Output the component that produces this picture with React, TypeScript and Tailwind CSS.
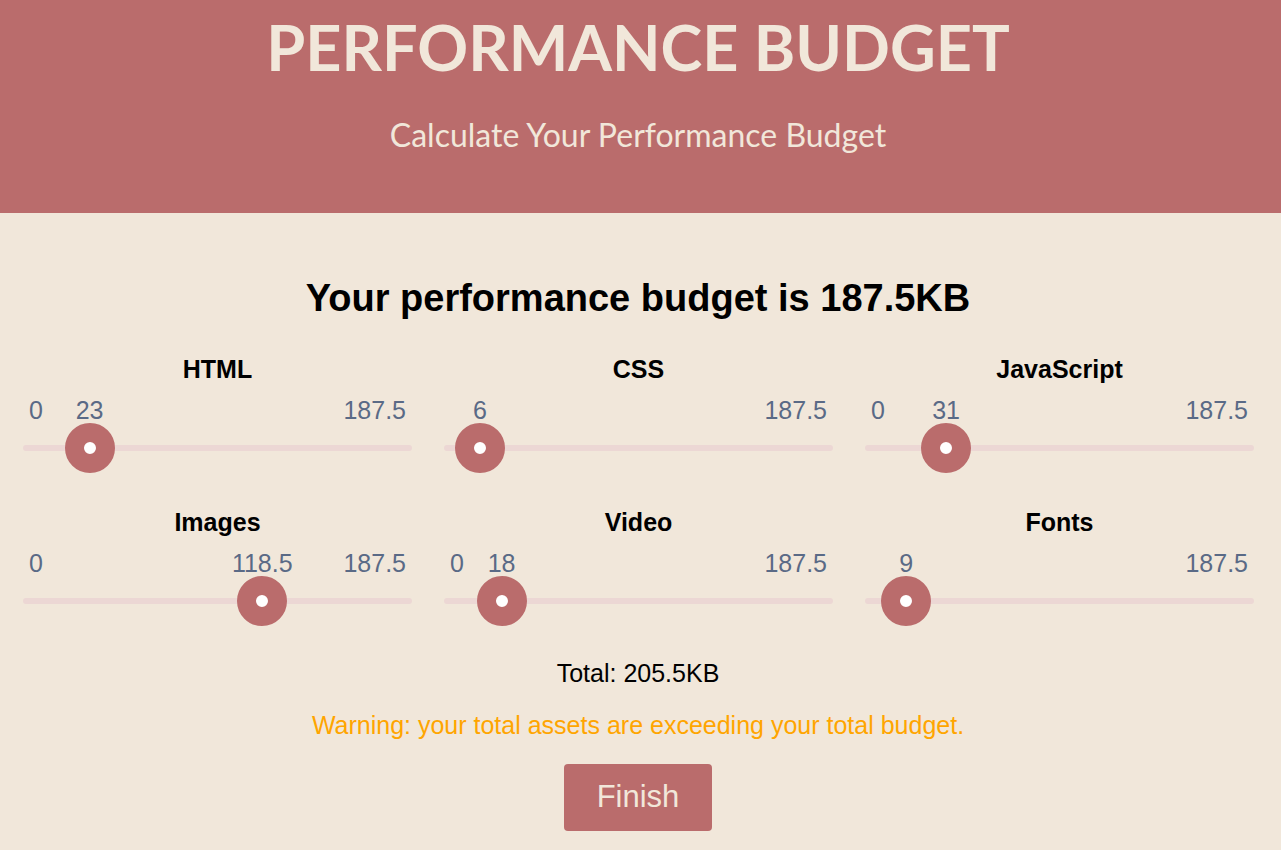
import React from "react";

const MAX = 187.5;

const assets = [
  { name: "HTML", value: 23 },
  { name: "CSS", value: 6 },
  { name: "JavaScript", value: 31 },
  { name: "Images", value: 118.5 },
  { name: "Video", value: 18 },
  { name: "Fonts", value: 9 },
];

const Slider = ({ name, value }: { name: string; value: number }) => {
  // thumb travels inside the track, so its center runs from 25px to width - 25px
  const pct = value / MAX;
  const left = `calc(25px + (100% - 50px) * ${pct})`;

  return (
    <div className="flex flex-col">
      <div className="h-[28px] leading-[28px] text-center font-bold text-[25px] text-black">
        {name}
      </div>

      {/* min / value / max labels */}
      <div className="relative mt-[16px] h-[24px] leading-[22px] text-[25px] text-[#5a6a86] px-[6px] flex justify-between">
        <span className={value < 10 ? "invisible" : ""}>0</span>
        <span>{MAX}</span>
        <span
          className="absolute top-0 -translate-x-1/2 whitespace-nowrap"
          style={{ left }}
        >
          {value}
        </span>
      </div>

      {/* track + thumb */}
      <div className="relative h-[50px] flex items-center">
        <div className="w-full h-[6px] rounded-full bg-[#ecd7d4]" />
        <div
          className="absolute top-0 -translate-x-1/2 w-[50px] h-[50px] rounded-full bg-white border-[19px] border-[#ba6c6c]"
          style={{ left }}
        />
      </div>
    </div>
  );
};

export default function App() {
  const total = assets.reduce((sum, a) => sum + a.value, 0);

  return (
    <div className="min-h-[850px] bg-[#f1e7da] font-['Liberation_Sans',Arial,sans-serif]">
      {/* Header */}
      <header className="h-[213px] bg-[#ba6c6c] text-[#f1e7da] text-center font-['Lato',sans-serif] pr-[5px]">
        <h1 className="pt-[15px] text-[63px] leading-none font-bold">
          PERFORMANCE BUDGET
        </h1>
        <p className="mt-[41px] text-[32px] leading-none">
          Calculate Your Performance Budget
        </p>
      </header>

      <main className="flex flex-col items-center pr-[5px]">
        <h2 className="mt-[63px] h-[44px] leading-[44px] text-[38px] font-bold text-black text-center">
          Your performance budget is {MAX}KB
        </h2>

        <div className="w-full mt-[35px] pl-[23px] pr-[22px] grid grid-cols-3 gap-x-[32px] gap-y-[35px]">
          {assets.map((a) => (
            <Slider key={a.name} name={a.name} value={a.value} />
          ))}
        </div>

        <p className="mt-[33px] h-[28px] leading-[28px] text-[25px] text-black">
          Total: {total}KB
        </p>

        <p className="mt-[24px] h-[28px] leading-[28px] text-[25px] text-[#ffa500]">
          Warning: your total assets are exceeding your total budget.
        </p>

        <button className="mt-[25px] w-[148px] h-[67px] rounded-[4px] bg-[#ba6c6c] text-[#f1e7da] text-[31px]">
          Finish
        </button>
      </main>
    </div>
  );
}
